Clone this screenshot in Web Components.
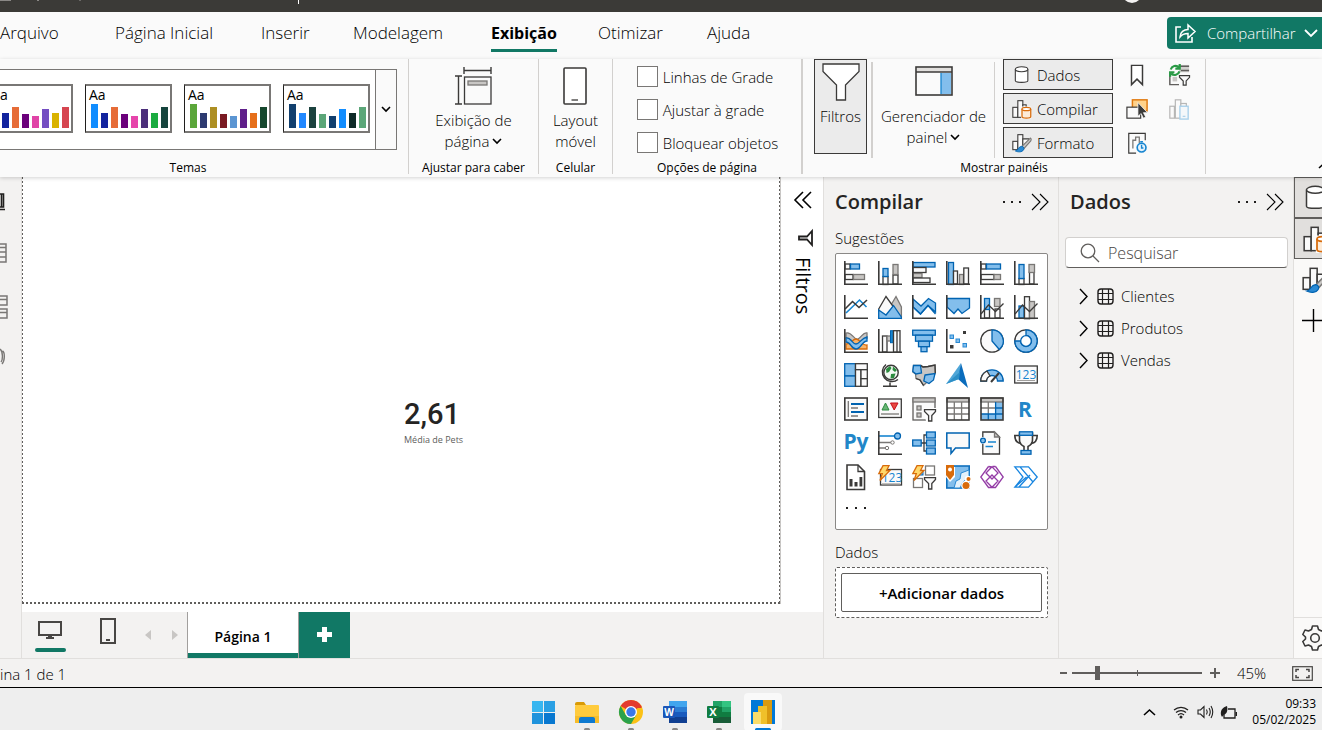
<!DOCTYPE html>
<html lang="pt-BR">
<head>
<meta charset="utf-8">
<title>Power BI Desktop</title>
<style>
  html, body { margin: 0; height: 100%; }
  body { font-family: "Open Sans", "Noto Sans", sans-serif; font-size: 15px; font-weight: 300; color: #000; background: #f3f2f1; overflow: hidden; }
</style>
</head>
<body>
<pbi-app></pbi-app>
<script>
const define = (name, html, init) => {
  const tpl = document.createElement('template');
  tpl.innerHTML = `<style>*{box-sizing:border-box}button,input{font:inherit;color:inherit}button{margin:0;padding:0;border:0;background:none;text-align:center}</style>` + html;
  customElements.define(name, class extends HTMLElement {
    constructor() {
      super();
      this.attachShadow({ mode: 'open' }).append(tpl.content.cloneNode(true));
    }
    connectedCallback() { if (init) init(this, this.shadowRoot); }
  });
};

/* ---------- icons ---------- */
const D = 'stroke="#3b3a39" stroke-width="1.3"';
const W = 'fill="#fafafa" ' + D;
const B = 'fill="#83beec" stroke="#0063b1" stroke-width="1.3"';
const G = 'fill="#c8c6c4" stroke="#797775" stroke-width="1.3"';
const axis = `<path d="M.8 0V23.2H24" fill="none" stroke="#3b3a39" stroke-width="1.6"/>`;
const r = (x, y, w, h, s) => `<rect x="${x}" y="${y}" width="${w}" height="${h}" ${s}/>`;
const p = (d, s) => `<path d="${d}" ${s}/>`;
const line = (d, c = '#3b3a39', w = 1.3) => `<path d="${d}" fill="none" stroke="${c}" stroke-width="${w}"/>`;
const bolt = p('M5 .7H11L8.5 5.5H12L2 15.5L4.3 8.7H.8Z', 'fill="#ffd86b" stroke="#d86b0b" stroke-width="1.3"');
const funnel = p('M12.5 12.7H23.5V14.5L19.8 18.5V24H16.6V18.5L12.5 14.5Z', W);
const num = (x, y) => `<text x="${x}" y="${y}" text-anchor="middle" font-size="12" font-weight="400" font-family="Open Sans" fill="#1785d0">123</text>`;
const I = {
  v0: r(1,3,5,5,W)+r(6.5,3,9,5,B)+r(1,13.5,8,5,W)+r(9.5,13.5,11,5,G)+axis,
  v1: r(5,15.5,5,8,W)+r(5,7.5,5,8,B)+r(15,14,5,9,W)+r(15,3.5,5,10,G)+axis,
  v2: r(1,1.5,22,4.5,B)+r(1,6.5,13,5,W)+r(1,12.5,9,4,G)+r(1,17,17,4.5,W)+axis,
  v3: r(2.5,1.5,5,22,B)+r(7.5,10,4,13,W)+r(13.5,13.5,4,10,G)+r(17.8,7,4.7,16,W)+axis,
  v4: r(1,3,5,5,W)+r(6.5,3,14,5,B)+r(1,13.5,13,5,W)+r(14,13.5,6.5,5,G)+axis,
  v5: r(5,17.5,5,6,W)+r(5,3.5,5,14,B)+r(15.5,11,4.5,12,W)+r(15,3.5,5.5,8,G)+axis,
  v6: line('M2 18L15.5 5L22.5 12','#1785d0',1.6)+line('M1 14L8.5 6.5L15 12.5L23 5','#3b3a39',1.6)+axis,
  v7: p('M13 10L18 1.5L23.4 12V23Z',G)+p('M0.7 14L8 1.5L17 14L8 22L.7 16Z',W)+p('M.7 15L8 20L15.5 10.5L23.3 22V23.3H.7Z',B),
  v8: p('M1 4L9 11L16.5 3.5L23.5 8V17L16 10.5L8.5 19L1 12Z',B)+line('M1 12L8.5 19L16 10.5L23.5 19','#0063b1')+axis,
  v9: p('M1 3.5H23.5V13L16 18.5L12 14L8 18.5L1 12Z',B)+axis,
  v10: r(4.5,14,5,9,W)+r(4.5,3.5,5,11,B)+r(15,14,5,9,W)+r(14.5,3.5,5.5,8,G)+line('M1 19L8.5 10L15.5 16.5L23.5 8.5')+axis,
  v11: r(5,11,5,12,B)+r(10.5,1.7,5,22,W)+r(15.5,6.5,5,17,G)+line('M1 19L8.5 10L15.5 16.5L23.5 8.5')+axis,
  v12: p('M2 4C8 2 10 12 14 10S19 3 23 4V9C18 9 17 14 13 14S7 9 2 9Z',G)+p('M2 15C8 15 8 10 12 10S18 17 23 16V20H2Z','fill="#f8b46a" stroke="#d86b0b" stroke-width="1.3"')+p('M2 9C7 8 8 15 12 15S17 9 23 8V12C18 12 17 20 12 20S7 13 2 13Z',B)+axis,
  v13: r(4.5,7,4.5,16,W)+r(9,7,4,5,G)+r(12.5,1.7,2.8,12,'fill="#1785d0" stroke="#0063b1"')+r(15.5,1.7,6.5,21.5,W)+line('M19 2V23')+axis,
  v14: r(.7,1.2,22.6,5,B)+r(3.5,6.2,17,6,B)+r(6.5,12.2,11,5.5,B)+r(9,17.7,6,5,B),
  v15: r(17,2,3,3,'fill="#3b3a39"')+r(4,6,3.5,3.5,'fill="#83beec" stroke="#2a8ad4"')+r(10,10,3.5,3.5,'fill="#83beec" stroke="#2a8ad4"')+r(17,14.5,3.5,3.5,'fill="#83beec" stroke="#2a8ad4"')+r(4,16,3.5,3.5,'fill="#3b3a39"')+axis,
  v16: `<circle cx="12" cy="12" r="11.2" ${W}/>`+p('M12 .8A11.2 11.2 0 0 1 19.3 20.5L12 12Z',B),
  v17: `<circle cx="12" cy="12" r="11.2" ${W}/>`+p('M12 .8A11.2 11.2 0 1 1 .8 12H6.5A5.5 5.5 0 1 0 12 6.5Z',B)+`<circle cx="12" cy="12" r="5.3" fill="#fff" stroke="#0063b1" stroke-width="1.3"/>`,
  v18: r(.7,.7,10.8,12.3,B)+r(.7,13,10.8,10.3,B)+r(11.5,.7,11.8,6,W)+r(11.5,6.7,5.5,16.6,W)+r(17,6.7,6.3,9,W)+r(17,15.7,6.3,7.6,W),
  v19: `<circle cx="13" cy="9.5" r="7.2" fill="#f3f9f3" stroke="#3b3a39" stroke-width="1.4"/>`+p('M8 6L12 3L13.5 5L11 9L8.5 10ZM15 3.5L19 7L17 9L14.5 7ZM13 11L17.5 10.5L16 15L12.5 15.5Z','fill="#2b8a3e"')+line('M8 1.5A9.5 9.5 0 1 0 20 16.5M12 19.5V22.5M5 23.2H19','#3b3a39',1.5),
  v20: p('M1.5 2.5H9L11 4L16 3.5L23 2L23.3 10L19 17.5L14 20L11.5 22.5L8 17L4 15.5L3.5 11L.8 9Z',G)+p('M1.5 2.5H8.5L9.5 10L4 11L.8 8.5Z',B)+p('M13 12L23 10.5L21.5 17L17 20.5L11.8 18Z',B)+line('M9 2.5L11 4L16 3.5L23 2L23.3 10M11.5 22.5L8 17L4 15.5'),
  v21: p('M15 0L0 21L13 16Z','fill="#4fa6d8"')+p('M15 0L22 25L12 16Z','fill="#0a6cbc"')+p('M0 21L13 16L14 9Z','fill="#2d8fc7"'),
  v22: p('M.8 18A11.2 11.2 0 0 1 23.2 18H17.5A5.5 5.5 0 0 0 6.5 18Z',B)+p('M.8 18A11.2 11.2 0 0 1 7 8L10 13A5.5 5.5 0 0 0 6.5 18Z',W)+line('M11 19L19 10','#3b3a39',2),
  v23: r(.7,3,22.6,17,W)+num(12,16)+line('M3 17.5H21','#a19f9d',1),
  v24: r(.8,1,22.4,22,'fill="#fafafa" stroke="#3b3a39" stroke-width="1.6"')+line('M4.3 4V20','#797775')+line('M7 7H20M7 15H20','#0063b1',2)+line('M7 11H14M7 19H14','#797775'),
  v25: r(.7,2,22.6,18.5,W)+p('M4 13L7.5 6L11 13Z','fill="#67b574" stroke="#2b8a3e"')+p('M12.5 6H20L16.2 13Z','fill="#e8473f" stroke="#c50f1f"')+line('M3 17H21','#797775'),
  v26: r(1,1,22,22,'fill="#fafafa" stroke="#605e5c" stroke-width="1.3"')+r(1,1,22,4,G)+r(5,9,4,4,G)+r(5,16,4,4,G)+p('M11 11H24V24H14Z','fill="#fff"')+funnel,
  v27: r(1,1,22,22,'fill="#fff"')+r(1,1,22,4,G)+line('M1 11H23M1 17H23M8.3 5V23M15.6 5V23','#797775')+r(1,1,22,22,'fill="none" stroke="#3b3a39" stroke-width="1.6"'),
  v28: r(1,1,22,22,'fill="#fff"')+r(1,17,22,6,'fill="#83beec"')+r(15.6,5,7.4,18,'fill="#83beec"')+r(1,1,22,4,G)+line('M1 11H15M8.3 5V17','#797775')+line('M1 17H23M15.6 5V23M8.3 17V23M15.6 11H23','#0063b1')+r(1,1,22,22,'fill="none" stroke="#3b3a39" stroke-width="1.6"'),
  v29: `<text x="11" y="20" text-anchor="middle" font-size="21" font-weight="700" font-family="Open Sans" fill="#2186c8">R</text>`,
  v30: `<text x="12" y="18" text-anchor="middle" font-size="21" font-weight="700" font-family="Open Sans" fill="#2186c8">Py</text>`,
  v31: line('M1 5H17','#1785d0',1.6)+line('M1 11.5H13M1 17H8','#797775')+`<circle cx="19.5" cy="5" r="3" ${B}/><circle cx="14.5" cy="11.5" r="1.7" fill="#fff" stroke="#797775"/><circle cx="9" cy="17" r="1.7" fill="#fff" stroke="#797775"/>`+axis,
  v32: line('M9 12H14M15 4H12V20H15')+r(.7,9,8.5,6,B)+r(14.5,1,8.8,6,B)+r(14.5,9,8.8,6,B)+r(14.5,17,8.8,6,B),
  v33: p('M.8 2H23.2V17H9.5L5 22.5V17H.8Z','fill="#fafafa" stroke="#0063b1" stroke-width="1.5"'),
  v34: p('M2.8 1H14.5L19.5 6V23H2.8Z',W)+p('M14.5 1V6H19.5Z',G)+r(0,6,5,7,'fill="#fff"')+`<circle cx="3" cy="9.5" r="2.4" ${B}/>`+line('M8 11H16M5.5 15.5H13','#1785d0',1.3),
  v35: p('M5.5 2H18.5V9C18.5 13 15 15 14 15.5V20H10V15.5C9 15 5.5 13 5.5 9Z','fill="#fafafa" stroke="#3b3a39" stroke-width="1.6"')+line('M5.5 4.5H.8C.8 9 3 12 7 12.5M18.5 4.5H23.2C23.2 9 21 12 17 12.5','#3b3a39',1.6)+r(5.5,.8,13,3.5,B)+r(7,19.5,10,3.7,B),
  v36: p('M3 0H14L20.5 6.5V24.5H3Z','fill="#fff" stroke="#3b3a39" stroke-width="1.6"')+line('M14 0V6.5H20.5')+r(5.5,14,3,7.5,'fill="#3b3a39"')+r(10.5,17,3,4.5,'fill="#3b3a39"')+r(15.5,12,2.8,9.5,'fill="#3b3a39"'),
  v37: r(2.5,4.5,21,15.5,W)+num(14,17)+line('M4 19H22','#a19f9d')+bolt,
  v38: r(13.5,1,9,9,'fill="#fff" stroke="#797775" stroke-width="1.3"')+r(1.5,13.5,9,9,'fill="#fff" stroke="#797775" stroke-width="1.3"')+r(7,6,4,4,'fill="#83beec" stroke="#0063b1"')+bolt+funnel,
  v39: r(.8,1,22.4,22,'fill="#83beec" stroke="#1070bd" stroke-width="1.6"')+p('M8 23L10 16L14 14L15 8L23 5V12L17 17L14 23Z','fill="#e3f1fb" stroke="#2a8ad4"')+p('M2 2H9V12L4 17L0 12Z','fill="#fff"')+p('M0 0H8V10L4 15L0 10Z','fill="#d86b0b"')+`<circle cx="4" cy="4.5" r="2" fill="#fff"/><circle cx="22" cy="14" r="3.2" fill="#fff"/><circle cx="20" cy="20.5" r="4.8" fill="#fff"/><circle cx="20" cy="20.5" r="3.5" fill="#d86b0b"/><circle cx="22.5" cy="14" r="2" fill="#d86b0b"/>`,
  v40: line('M8.5 1.5L12 1.8L18 8L12 14L6 8L12 1.8M15.5 1.5H12.5M8.5 1.5L.8 12L8.5 22.5H15.5L23.2 12L15.5 1.5M12 22.2L6 16L12 10L18 16L12 22.2','#943ca6',1.3),
  v41: line('M.8 1.8H14.5L23.2 12L14.5 22.2H.8L9 12ZM6 1.8L19 17M12.5 12L1 22M16 10L5 22','#1785e0',1.3),
  cyl: p('M4 5V19C4 21.5 19 21.5 19 19V5','fill="#fff" '+D)+`<ellipse cx="11.5" cy="5" rx="7.5" ry="3" fill="#fff" ${D}/>`,
  build: r(1,10,6,12,W)+r(7,2,6,20,W)+r(13,7,4,8,W)+r(11,9,12,15,'fill="#fafafa"')+p('M12 12V21C12 23.5 22.5 23.5 22.5 21V12','fill="#fdebd8" stroke="#d86b0b" stroke-width="1.5"')+`<ellipse cx="17.2" cy="12" rx="5.2" ry="2" fill="#fff" stroke="#d86b0b" stroke-width="1.5"/>`,
  format: r(1,10,6,10,W)+r(7,2,6,18,W)+p('M13 7H20V10L13 18Z',W)+p('M22 6C23.5 6.5 23 8.5 22.5 9.5L14.5 18.5L12 16Z',G)+p('M11.5 16C13.5 16 15 18 14 20C12 23.5 7 23 4 21.5C8 21 7 16.5 11.5 16Z','fill="#2a8ad4" stroke="#0063b1"'),
  bookmark: p('M6 1.5H18V22.5L12 16.5L6 22.5Z','fill="#fff" stroke="#3b3a39" stroke-width="1.6"'),
  select: r(7,2,16,12,'fill="#ffd28a" stroke="#e07a10" stroke-width="1.6"')+r(1,10,15,12,W)+p('M13 5V20L16.5 17L19 22L21.5 20.8L19 16H23.5Z','fill="#3b3a39" stroke="#fff" stroke-width=".8"'),
  perf: line('M11 23H3V1.5H21V9')+line('M7.5 18V9H10.5V5.5H14.5V12','#797775',1.4)+`<circle cx="17" cy="17" r="4.8" fill="#e6f3fc" stroke="#1785d0" stroke-width="1.8"/>`+line('M17 14V17.5H19M15.5 10.5H18.5','#1785d0',1.5),
  sync: r(12,1,11,8,'fill="#d2d0ce"')+line('M13 2.5H23M14 7H23M2 12V22.5H12','#605e5c',1.6)+r(5,14,5,5,'fill="#c8c6c4"')+line('M3 6A5.5 5.5 0 0 1 12 3.5M12.5 8A5.5 5.5 0 0 1 3.5 10.5M12.8 0V5H8M2.3 14V9H7','#2b9a46',2.4)+p('M12.5 12.7H23.5V14.5L19.8 18.5V23H16.6V18.5L12.5 14.5Z',W),
  disabled: `<g opacity=".35">`+r(2,9,5,13,W)+r(8,2,6,20,W)+r(14,6,6,6,W)+r(13,9,9,14,'fill="#eaf4fc" stroke="#1785d0" stroke-width="1.5"')+line('M16 20H19','#1785d0')+`</g>`,
  share: line('M6 4H1V19H17V14','#fff',1.6)+line('M5 14C5 9 9 6.5 13 6.5V2L20 8.5L13 15V10.5C9 10.5 6.5 12 5 14Z','#fff',1.5),
  down: line('M1 1L5 5L9 1','currentColor',1.6),
  up: line('M1 6L6.5 1L12 6','currentColor',1.6),
  downW: line('M1 1L7 7L13 1','#fff',1.8),
  pageView: line('M9 0V7M36 0V7M9 3.5H36M0 9H7M0 37H7M3.5 9V37','#3b3a39',1.4)+r(9.5,10,26.5,27,W)+r(13,14,19,4,G),
  phone: r(1,1,22,36,'fill="#fff" rx="1" stroke="#3b3a39" stroke-width="1.6"')+line('M8.5 33H15'),
  bigFunnel: p('M1 1H37V8.5L23.5 22V37H14.5V22L1 8.5Z','fill="#fff" '+D),
  panel: r(1,1,36,28,'fill="#fafafa" stroke="#3b3a39" stroke-width="1.6"')+r(2,2,34,4,'fill="#e1dfdd"')+line('M1 6H37')+r(26,7,10,21,'fill="#83beec"')+line('M26 7V28','#1785d0'),
  dbl: line('M1 1L9 9L1 17M9 1L17 9L9 17','currentColor',1.1),
  dblL: line('M9 1L1 9L9 17M17 1L9 9L17 17','currentColor',1.6),
  filt: p('M14 1V15L9 9.5H1V6.5H9Z','fill="none" stroke="#201f1e" stroke-width="1.8"'),
  chev: line('M1 1L8 8.5L1 16','currentColor',1.4),
  table: `<rect x="1" y="1" width="15" height="15" rx="3" fill="none" stroke="#201f1e" stroke-width="1.4"/>`+line('M1 5.5H16M1 11.5H16M5.5 1V16M11.5 1V16','#201f1e',1.2),
  search: `<circle cx="8" cy="8" r="6.8" fill="none" stroke="#605e5c" stroke-width="1.3"/>`+line('M13 13L19 19','#605e5c',1.3),
  plus: line('M11.5 0V23M0 11.5H23','#000',1.4),
  gear: p('M10.5 1H15.5L16.5 4.5L19.5 6L23 5L25.3 9.5L23 12V14L25.3 16.5L23 21L19.5 20L16.5 21.5L15.5 25H10.5L9.5 21.5L6.5 20L3 21L.8 16.5L3.5 14V12L.8 9.5L3 5L6.5 6L9.5 4.5Z','fill="none" stroke="#3b3a39" stroke-width="1.6" stroke-linejoin="round"')+`<circle cx="13" cy="13" r="4.3" fill="none" stroke="#3b3a39" stroke-width="1.6"/>`,
  monitor: r(1,1,22,13,'fill="none" stroke="#484644" stroke-width="2"')+r(10,14,4,3,'fill="#484644"')+r(8,16,8,2,'fill="#484644"'),
  phoneS: r(1,1,14,24,'fill="none" stroke="#484644" stroke-width="2"')+r(6,21,4,2,'fill="#484644"'),
  triL: p('M6 0V10L0 5Z','fill="#c8c6c4"'), triR: p('M0 0V10L6 5Z','fill="#c8c6c4"'),
  cross: r(5,0,5,15,'fill="#fff"')+r(0,5,15,5,'fill="#fff"'),
  report: line('M0 1H3.5V14H0M1.5 1V14M0 16.5H5','#201f1e',1.6),
  tableRail: line('M0 1H6V19H0M0 4.5H6M0 9H6M0 14H6','#797775',1.5),
  modelRail: line('M0 1H7V10H0M0 4.5H7M0 14H7V23H0M0 17.5H7','#797775',1.5),
  daxRail: line('M0 1C3 3 3 12 1 14M2.5 3C5 4 5 13 2 16','#797775',1.4),
  fit: r(.7,.7,19.6,13.6,'fill="none" stroke="#484644" stroke-width="1.2"')+line('M4 6V3.5H7M14 3.5H17V6M17 9V11.5H14M7 11.5H4V9','#484644',1.5),
  win: r(0,0,11,11,'fill="#38b6f0"')+r(12,0,11,11,'fill="#2aa0e4"')+r(0,12,11,11,'fill="#1f93dc"')+r(12,12,11,11,'fill="#0878d0"'),
  folder: p('M0 2Q0 0 2 0H9L11 3H0Z','fill="#d99a06"')+r(0,3,24,18,'rx="1" fill="#ffcb3d"')+p('M0 14H24V21H0Z','fill="#f7bd2a"')+p('M4 21V17Q4 15 6 15H18Q20 15 20 17V21Z','fill="#0f7ad0"'),
  chrome: `<circle cx="12" cy="12" r="12" fill="#fbc116"/>`+p('M12 12L1.6 6A12 12 0 0 1 22.4 6Z','fill="#e33b2e"')+r(10,6,12.5,2,'fill="#e33b2e"')+p('M1.6 6A12 12 0 0 0 12 24L17.2 15L12 12L6.8 15Z','fill="#2ba24c"')+`<circle cx="12" cy="12" r="6" fill="#fff"/><circle cx="12" cy="12" r="4.7" fill="#3b78ea"/>`,
  word: r(6,0,18,6,'fill="#41a5ee"')+r(6,6,18,5,'fill="#2b7cd3"')+r(6,11,18,5,'fill="#185abd"')+r(6,16,18,6,'fill="#103f91"')+r(0,5,12,12,'rx="1" fill="#1a56b8"')+`<text x="6" y="14.5" text-anchor="middle" font-family="Open Sans" font-weight="700" font-size="10" fill="#fff">W</text>`,
  excel: r(6,0,9,6,'fill="#21a366"')+r(15,0,9,6,'fill="#33c481"')+r(6,6,9,5,'fill="#107c41"')+r(15,6,9,5,'fill="#21a366"')+r(6,11,18,5,'fill="#107c41"')+r(6,16,18,6,'fill="#185c37"')+r(0,5,12,12,'rx="1" fill="#107c41"')+`<text x="6" y="15" text-anchor="middle" font-family="Open Sans" font-weight="700" font-size="11" fill="#fff">X</text>`,
  pbi: r(0,0,24,24,'fill="#0078d7"')+r(12,0,9,24,'fill="#d99a10"')+r(7,6,9,18,'fill="#f0c02a"')+r(2,12,8,12,'fill="#f9dc6a"'),
  wifi: line('M1 5A10.5 10.5 0 0 1 15 5M3 7.5A7.5 7.5 0 0 1 13 7.5M5 10A4.5 4.5 0 0 1 11 10','#201f1e',1.2)+`<circle cx="8" cy="12" r="1.5" fill="#201f1e"/>`,
  sound: line('M1 5H3.5L7 1.5V12.5L3.5 9H1ZM9.5 4.5Q11 7 9.5 9.5M12 3Q14.5 7 12 11M14 1Q17.5 7 14 13','#201f1e',1.1),
  battery: line('M7 3H14V12H3V8','#201f1e',1.3)+r(14.5,6,1.5,4,'fill="#201f1e"')+p('M0 9C-1 3 3 1 6 0C7 4 6 8 3 8.5L1 11Z','fill="#201f1e"'),
  titleBits: r(0,0,11,1,'fill="#8a8886"')+r(37,0,2,1,'fill="#8a8886"')+r(79,0,2,1,'fill="#6a6866"')+r(298,0,1,4,'fill="#fff"')
};
customElements.define('pbi-icon', class extends HTMLElement {
  connectedCallback() {
    if (this.shadowRoot) return;
    const w = this.getAttribute('w') || 24, h = this.getAttribute('h') || 24;
    const vb = this.getAttribute('box') || `0 0 ${w} ${h}`;
    this.attachShadow({ mode: 'open' }).innerHTML =
      `<style>:host{display:block;flex:none}svg{display:block;overflow:visible}</style>
       <svg width="${w}" height="${h}" viewBox="${vb}" aria-hidden="true">${I[this.getAttribute('name')]}</svg>`;
  }
});

/* ---------- title bar and tabs ---------- */
define('pbi-titlebar', `<style>
  :host{display:flex;justify-content:space-between;height:12px;background:#3b3a37;overflow:hidden;flex:none}
  i{width:20px;height:20px;border-radius:50%;background:#f3f2f1;margin:-17px 180px 0 0}
</style><pbi-icon name="titleBits" w="400" h="12"></pbi-icon><i></i>`);

define('pbi-tabs', `<style>
  :host{display:flex;justify-content:space-between;height:47px;flex:none;background:#fafafa;font-size:17px}
  nav{display:grid;grid-template-columns:115px 146px 92px 138px 107px 109px auto;height:40px}
  a{justify-self:start;color:inherit;text-decoration:none;line-height:24px;padding-top:9px;white-space:nowrap;border-bottom:3px solid transparent}
  a.on{font-size:16px;font-weight:700;border-color:#117865}
  button{display:flex;align-items:center;width:155px;height:32px;margin-top:5px;padding-left:8px;background:#117865;color:#fff;border-radius:4px 0 0 4px;font-size:15px;line-height:20px}
  span{width:92px;margin:0 5px 0 11px;text-align:left}
</style>
<nav><a href="#arquivo">Arquivo</a><a href="#inicio">Página Inicial</a><a href="#inserir">Inserir</a><a href="#modelagem">Modelagem</a><a href="#exibicao" class="on">Exibição</a><a href="#otimizar">Otimizar</a><a href="#ajuda">Ajuda</a></nav>
<button><pbi-icon name="share" w="21" h="20"></pbi-icon><span>Compartilhar</span><pbi-icon name="downW" w="14" h="9"></pbi-icon></button>`);

/* ---------- ribbon ---------- */
define('ribbon-group', `<style>
  :host{display:flex;flex-direction:column;flex:none;height:115px;border-right:1px solid #d2d0ce}
  .body{flex:1;display:flex;justify-content:center;min-width:0}
  .label{text-align:center;font-size:12px;font-weight:400;line-height:16px;height:14px;white-space:nowrap}
</style><div class="body"><slot></slot></div><div class="label"></div>`,
(el, s) => { s.querySelector('.label').textContent = el.getAttribute('label'); });

define('theme-card', `<style>
  :host{display:block;flex:none}
  button{display:flex;flex-direction:column;justify-content:space-between;width:87px;height:49px;padding:1px 2px 3px 3px;background:#fff;border:2px solid #797775;border-left:1px solid #201f1e;text-align:left}
  :host([cut]) button{width:73px;border-left:0;padding-left:0}
  span{font-size:14px;line-height:16px;font-weight:500;margin-bottom:-8px}
  .bars{display:flex;justify-content:flex-end;align-items:flex-end;gap:3px;height:24px}
  .bars i{width:7px;flex:none}
</style><button aria-label="Tema"><span></span><div class="bars"></div></button>`,
(el, s) => {
  s.querySelector('span').textContent = el.hasAttribute('cut') ? 'a' : 'Aa';
  const c = el.getAttribute('colors').split(' ');
  const h = [24, 15, 21, 14, 12, 19, 15, 21].slice(-c.length);
  s.querySelector('.bars').innerHTML = c.map((v, i) => `<i style="height:${h[i]}px;background:#${v}"></i>`).join('');
});

define('theme-gallery', `<style>
  :host{display:flex;flex:1;min-width:0;height:81px;margin:10px -21px 0 0;border:solid #797775;border-width:1px 1px 1px 0;background:#fff}
  .list{flex:1;min-width:0;display:flex;align-items:center;gap:12px;padding-bottom:3px}
  .more{width:21px;background:#fafafa;border-left:1px solid #797775;display:grid;place-items:center}
</style><div class="list">
<theme-card cut colors="12239e e66c37 6b007b e044a7 744ec2 d9b300 d64550"></theme-card>
<theme-card colors="118dff 12239e e66c37 6b007b e645ab 4b2e7a 1aab40 15443d"></theme-card>
<theme-card colors="5ba63a 2d3a70 ad8f23 7a1a22 5b95d2 5f1f8a e66f1a 15472d"></theme-card>
<theme-card colors="113f6e 2188ff 1b423e 5ba678 113f6e 118dff 0e2a28 5ba678"></theme-card>
</div><button class="more" aria-label="Mais temas"><pbi-icon name="down" w="10" h="7"></pbi-icon></button>`);

define('ribbon-button', `<style>
  :host{display:flex;flex:none;justify-content:center}
  button{display:flex;flex-direction:column;align-items:center;line-height:21px}
</style><button><slot name="icon"></slot><slot></slot></button>`);

define('check-row', `<style>
  label{display:flex;align-items:center;gap:5px;height:33px;line-height:20px;white-space:nowrap}
  input{appearance:none;width:21px;height:21px;margin:0;border:1px solid #797775;background:#fff}
</style><label><input type="checkbox"><slot></slot></label>`);

define('pane-toggle', `<style>
  button{display:flex;align-items:center;gap:5px;width:110px;height:31px;padding-left:8px;border:1px solid #3b3a39;background:#ebebeb;line-height:20px}
</style><button aria-pressed="true"><slot></slot></button>`);

define('pbi-ribbon', `<style>
  :host{display:flex;position:relative;z-index:2;height:118px;flex:none;background:#fafafa;box-shadow:0 1px 4px rgba(0,0,0,.18)}
  .themes{width:409px;padding-right:32px}
  .fit{width:130px}
  .cel{width:74px}
  .opts{width:190px;border-right-width:2px}
  .two{display:flex;flex-direction:column;align-items:center;white-space:nowrap}
  .two div{display:flex;align-items:center;gap:3px}
  .checks{display:flex;flex-direction:column;padding:1px 0 0 1px}
  .mostrar{display:flex;width:402px;padding-left:11px}
  .filtros{display:flex;flex-direction:column;align-items:center;width:53px;height:95px;background:#ebebeb;border:1px solid #3b3a39;padding-top:3px;gap:5px;line-height:21px}
  .mgr{width:124px;height:96px;margin:3px 0 0 4px;border:1px solid #d2d0ce;border-width:0 1px 0 2px;padding-top:4px;display:flex;justify-content:center}
  .toggles{display:flex;flex-direction:column;gap:3px;margin-left:8px}
  .minis{display:grid;grid-template-columns:42px 42px;grid-template-rows:31px 31px 31px;gap:3px 0;place-items:center;margin-left:3px;height:99px}
  .up{margin:103px 0 0 auto;width:4px;overflow:hidden;height:8px}
</style>
<ribbon-group label="Temas" class="themes"><theme-gallery></theme-gallery></ribbon-group>
<ribbon-group label="Ajustar para caber" class="fit"><ribbon-button><pbi-icon slot="icon" name="pageView" w="38" h="38" style="margin:8px 0 5px"></pbi-icon><div class="two">Exibição de<div>página <pbi-icon name="down" w="10" h="7"></pbi-icon></div></div></ribbon-button></ribbon-group>
<ribbon-group label="Celular" class="cel"><ribbon-button><pbi-icon slot="icon" name="phone" w="24" h="38" style="margin:8px 0 5px"></pbi-icon><div class="two"><span>Layout</span><span>móvel</span></div></ribbon-button></ribbon-group>
<ribbon-group label="Opções de página" class="opts"><div class="checks"><check-row>Linhas de Grade</check-row><check-row>Ajustar à grade</check-row><check-row>Bloquear objetos</check-row></div></ribbon-group>
<ribbon-group label="Mostrar painéis"><div class="mostrar">
  <button class="filtros" aria-pressed="true"><pbi-icon name="bigFunnel" w="38" h="38"></pbi-icon>Filtros</button>
  <div class="mgr"><ribbon-button><pbi-icon slot="icon" name="panel" w="38" h="30" style="margin-bottom:10px"></pbi-icon><div class="two">Gerenciador de<div>painel <pbi-icon name="down" w="10" h="7"></pbi-icon></div></div></ribbon-button></div>
  <div class="toggles"><pane-toggle><pbi-icon name="cyl" w="20" h="20" box="0 0 24 24"></pbi-icon>Dados</pane-toggle><pane-toggle><pbi-icon name="build" w="20" h="20" box="0 0 24 24"></pbi-icon>Compilar</pane-toggle><pane-toggle><pbi-icon name="format" w="20" h="20" box="0 0 24 24"></pbi-icon>Formato</pane-toggle></div>
  <div class="minis"><button aria-label="Indicadores"><pbi-icon name="bookmark" w="22" h="22" box="0 0 24 24"></pbi-icon></button><button aria-label="Sincronizar"><pbi-icon name="sync" w="22" h="22" box="0 0 24 24"></pbi-icon></button><button aria-label="Seleção"><pbi-icon name="select" w="22" h="22" box="0 0 24 24"></pbi-icon></button><button aria-label="Celular"><pbi-icon name="disabled" w="22" h="22" box="0 0 24 24"></pbi-icon></button><button aria-label="Desempenho"><pbi-icon name="perf" w="22" h="22" box="0 0 24 24"></pbi-icon></button></div>
</div></ribbon-group>
<div class="up"><pbi-icon name="up" w="13" h="7"></pbi-icon></div>`);

/* ---------- work area ---------- */
define('view-rail', `<style>
  :host{display:flex;flex-direction:column;gap:32px;width:22px;flex:none;padding-top:16px;border-right:1px solid #e1dfdd}
  button{display:block;height:20px;width:10px}
  .s{height:18px}
</style>
<button class="s" aria-label="Relatório"><pbi-icon name="report" w="6" h="18"></pbi-icon></button>
<button aria-label="Tabela"><pbi-icon name="tableRail" w="8" h="20"></pbi-icon></button>
<button aria-label="Modelo"><pbi-icon name="modelRail" w="8" h="24"></pbi-icon></button>
<button aria-label="Consulta"><pbi-icon name="daxRail" w="6" h="18"></pbi-icon></button>`);

define('report-canvas', `<style>
  :host{display:flex;flex:1;min-width:0;background:#fff;padding-bottom:8px}
  .page{position:relative;flex:1;border-right:1px solid #c8c6c4;
    background:repeating-linear-gradient(#605e5c 0 2px,transparent 2px 4px) 0 0/1px 100% no-repeat,
      repeating-linear-gradient(#605e5c 0 2px,transparent 2px 4px) 100% 0/1px 100% no-repeat,
      repeating-linear-gradient(90deg,#605e5c 0 2px,transparent 2px 4px) 0 100%/100% 2px no-repeat}
  .card{position:absolute;left:50%;top:52%;padding-left:3px;color:#252423}
  .v{font:500 29px/30px Roboto,sans-serif}
  .l{font-size:9px;font-weight:400;line-height:12px;margin-top:5px;color:#605e5c;white-space:nowrap}
</style><div class="page"><div class="card"><div class="v">2,61</div><div class="l">Média de Pets</div></div></div>`);

define('filters-strip', `<style>
  :host{display:flex;flex-direction:column;align-items:center;width:42px;flex:none;background:#fff;padding:14px 0 0 2px}
  button{display:block}
  .t{writing-mode:vertical-rl;font-size:20px;font-weight:500;line-height:26px;margin-top:11px}
</style><button aria-label="Expandir"><pbi-icon name="dblL" w="18" h="18"></pbi-icon></button>
<pbi-icon name="filt" w="15" h="16" style="margin:21px 0 0 4px"></pbi-icon><div class="t">Filtros</div>`);

define('page-bar', `<style>
  :host{display:flex;height:46px;flex:none;background:#f3f2f1}
  .v{display:flex;flex-direction:column;align-items:center;width:56px;height:46px;padding-top:9px}
  .v.m{width:60px;padding-top:6px}
  .v b{width:31px;height:4px;border-radius:2px;background:#117865;margin-top:9px}
  .arrows{display:flex;gap:21px;align-items:center;width:49px;padding-left:7px}
  .tab{width:112px;background:#fff;border:solid #a19f9d;border-width:0 1px;font-weight:600;font-size:14px;line-height:20px;box-shadow:inset 0 -5px #117865;padding-top:3px}
  .add{width:51px;background:#117865;display:grid;place-items:center;padding-bottom:2px}
</style>
<button class="v" aria-label="Layout de área de trabalho"><pbi-icon name="monitor" w="24" h="18"></pbi-icon><b></b></button>
<button class="v m" aria-label="Layout móvel"><pbi-icon name="phoneS" w="16" h="26"></pbi-icon></button>
<div class="arrows"><pbi-icon name="triL" w="6" h="10"></pbi-icon><pbi-icon name="triR" w="6" h="10"></pbi-icon></div>
<button class="tab">Página 1</button><button class="add" aria-label="Nova página"><pbi-icon name="cross" w="15" h="15"></pbi-icon></button>`);

define('side-pane', `<style>
  :host{display:flex;flex-direction:column;flex:none;width:235px;border-left:1px solid #e1dfdd;background:#f3f2f1}
  header{display:flex;align-items:center;height:36px;margin-top:7px;padding:0 9px 0 11px}
  h2{flex:1;margin:0;font-size:20px;line-height:28px;font-weight:600;color:#252423}
  .dots{width:18px;display:flex;justify-content:space-between;margin-right:10px}
  .dots i{width:2px;height:2px;background:#201f1e}
</style><header><h2></h2><button class="dots" aria-label="Mais opções"><i></i><i></i><i></i></button><button aria-label="Recolher"><pbi-icon name="dbl" w="18" h="18"></pbi-icon></button></header><slot></slot>`,
(el, s) => { s.querySelector('h2').textContent = el.getAttribute('heading'); });

define('visual-gallery', `<style>
  :host{display:block;margin:0 10px 0 11px}
  h3{margin:8px 0 5px;font-size:15px;line-height:20px;font-weight:300}
  .grid{display:grid;grid-template-columns:repeat(6,34px);grid-auto-rows:34px;place-items:center;justify-content:center;height:277px;padding:2px 2px 0 0;border:1px solid #8a8886;border-radius:2px;background:#fff}
  .dots{display:flex;gap:7px;height:2px;margin-top:-6px}
  .dots i{width:2px;height:2px;background:#201f1e}
  h3.d{margin-top:12px}
  .well{border:1px dashed #605e5c;border-radius:2px;padding:5px;background:#fff}
  .well button{display:block;width:100%;height:39px;border:1px solid #605e5c;border-radius:2px;background:#fff;font-weight:600;font-size:15px}
</style><h3>Sugestões</h3><div class="grid"></div><h3 class="d">Dados</h3><div class="well"><button>+Adicionar dados</button></div>`,
(el, s) => {
  let h = '';
  for (let i = 0; i < 42; i++) h += `<button aria-label="Visual ${i + 1}"><pbi-icon name="v${i}"></pbi-icon></button>`;
  s.querySelector('.grid').innerHTML = h + '<button class="dots" aria-label="Mais visuais"><i></i><i></i><i></i></button>';
});

define('data-fields', `<style>
  :host{display:block;padding:0 5px 0 6px}
  label{display:flex;align-items:center;gap:8px;height:31px;margin-top:17px;padding-left:14px;background:#fff;border:1px solid #d2d0ce;border-bottom-color:#605e5c;border-radius:4px}
  input{flex:1;min-width:0;border:0;padding:0;outline:0;background:none;font-size:16px;line-height:22px}
  input::placeholder{color:#484644;opacity:1}
  ul{list-style:none;margin:12px 0 0;padding:0 0 0 14px}
  li{display:flex;align-items:center;height:32px;line-height:20px}
  .c{margin-right:9px}.t{margin-right:7px}
</style><label><pbi-icon name="search" w="20" h="20"></pbi-icon><input type="search" placeholder="Pesquisar" aria-label="Pesquisar"></label>
<ul></ul>`,
(el, s) => {
  s.querySelector('ul').innerHTML = ['Clientes', 'Produtos', 'Vendas'].map(n =>
    `<li><pbi-icon class="c" name="chev" w="9" h="17"></pbi-icon><pbi-icon class="t" name="table" w="17" h="17"></pbi-icon>${n}</li>`).join('');
});

define('pane-rail', `<style>
  :host{display:flex;flex-direction:column;width:29px;flex:none;background:#faf9f8;border-left:1px solid #e1dfdd;overflow:hidden}
  button{display:flex;align-items:center;justify-content:flex-start;height:41px;padding-left:8px;flex:none}
  .on{background:#e1dfdd;border:solid #605e5c;border-width:1px 0 1px 1px}
  .g{margin-top:auto;border-top:1px solid #e1dfdd}
</style><button class="on" aria-label="Dados"><pbi-icon name="cyl" w="28" h="28" box="1 0 24 24"></pbi-icon></button><button class="on" aria-label="Compilar"><pbi-icon name="build" w="28" h="28" box="0 0 24 24"></pbi-icon></button><button aria-label="Formato"><pbi-icon name="format" w="28" h="28" box="0 0 24 24"></pbi-icon></button><button aria-label="Adicionar"><pbi-icon name="plus" w="23" h="23"></pbi-icon></button><button class="g" aria-label="Configurações"><pbi-icon name="gear" w="26" h="26"></pbi-icon></button>`);

/* ---------- status bar and taskbar ---------- */
define('status-bar', `<style>
  :host{display:flex;align-items:center;height:30px;flex:none;border-top:1px solid #e1dfdd;border-bottom:1px solid #000;line-height:20px}
  .pg{white-space:nowrap;margin-right:auto;padding-top:2px}
  .minus{width:7px;height:2px;background:#605e5c;margin-right:5px}
  .zoom{display:flex;width:130px}
  input{appearance:none;width:130px;height:14px;margin:0;background:linear-gradient(#605e5c,#605e5c) 0 6px/100% 2px no-repeat,linear-gradient(#605e5c,#605e5c) 65px 4px/1px 6px no-repeat}
  input::-webkit-slider-thumb{appearance:none;width:5px;height:14px;background:#605e5c}
  .plus{width:10px;height:10px;margin:0 17px 0 8px;background:linear-gradient(#605e5c,#605e5c) 0 4px/10px 2px no-repeat,linear-gradient(#605e5c,#605e5c) 4px 0/2px 10px no-repeat}
  output{width:38px;white-space:nowrap;margin-right:17px}
  .fit{margin-right:9px}
</style><div class="pg">ina 1 de 1</div><button class="minus" aria-label="Reduzir"></button><label class="zoom"><input type="range" min="0" max="100" value="18" aria-label="Zoom"></label><button class="plus" aria-label="Ampliar"></button><output>45%</output><button class="fit" aria-label="Ajustar à página"><pbi-icon name="fit" w="21" h="15"></pbi-icon></button>`);

define('task-bar', `<style>
  :host{display:grid;grid-template-columns:1fr auto 1fr;height:42px;flex:none;background:#eee;overflow:hidden}
  .apps{grid-column:2;display:flex;gap:6px;margin-right:16px}
  .apps button{position:relative;width:38px;height:38px;margin-top:5px;display:grid;place-items:center;border-radius:4px}
  .apps .run::after{content:"";position:absolute;bottom:0;left:16px;width:6px;height:3px;border-radius:2px;background:#8a8886}
  .apps .on{background:#f9f9f9}
  .apps .on::after{left:11px;width:16px;background:#0078d7}
  .tray{display:flex;justify-content:flex-end;align-items:center;padding:6px 6px 0 0;height:42px}
  .tray pbi-icon{margin-right:8px}
  .tray .up{margin-right:18px}
  .clock{text-align:right;font-size:12px;font-weight:400;line-height:16px;margin-left:7px}
</style><div class="apps"><button aria-label="Iniciar"><pbi-icon name="win" w="23" h="23"></pbi-icon></button><button class="run" aria-label="Explorador"><pbi-icon name="folder" w="24" h="21"></pbi-icon></button><button class="run" aria-label="Chrome"><pbi-icon name="chrome"></pbi-icon></button><button class="run" aria-label="Word"><pbi-icon name="word" w="24" h="22"></pbi-icon></button><button class="run" aria-label="Excel"><pbi-icon name="excel" w="24" h="22"></pbi-icon></button><button class="run on" aria-label="Power BI"><pbi-icon name="pbi"></pbi-icon></button></div>
<div class="tray"><pbi-icon class="up" name="up" w="12" h="7"></pbi-icon><pbi-icon name="wifi" w="16" h="14"></pbi-icon><pbi-icon name="sound" w="16" h="14"></pbi-icon><pbi-icon name="battery" w="16" h="13"></pbi-icon><div class="clock"><div>09:33</div><div>05/02/2025</div></div></div>`);

define('pbi-app', `<style>
  :host{display:flex;flex-direction:column;min-height:100vh}
  .work{flex:1;display:flex;min-height:0}
  .center{flex:1;min-width:0;display:flex;flex-direction:column}
  .top{flex:1;display:flex}
</style><pbi-titlebar></pbi-titlebar><pbi-tabs></pbi-tabs><pbi-ribbon></pbi-ribbon>
<div class="work"><view-rail></view-rail><div class="center"><div class="top"><report-canvas></report-canvas><filters-strip></filters-strip></div><page-bar></page-bar></div>
<side-pane heading="Compilar"><visual-gallery></visual-gallery></side-pane><side-pane heading="Dados"><data-fields></data-fields></side-pane><pane-rail></pane-rail></div>
<status-bar></status-bar><task-bar></task-bar>`);
</script>
</body>
</html>
